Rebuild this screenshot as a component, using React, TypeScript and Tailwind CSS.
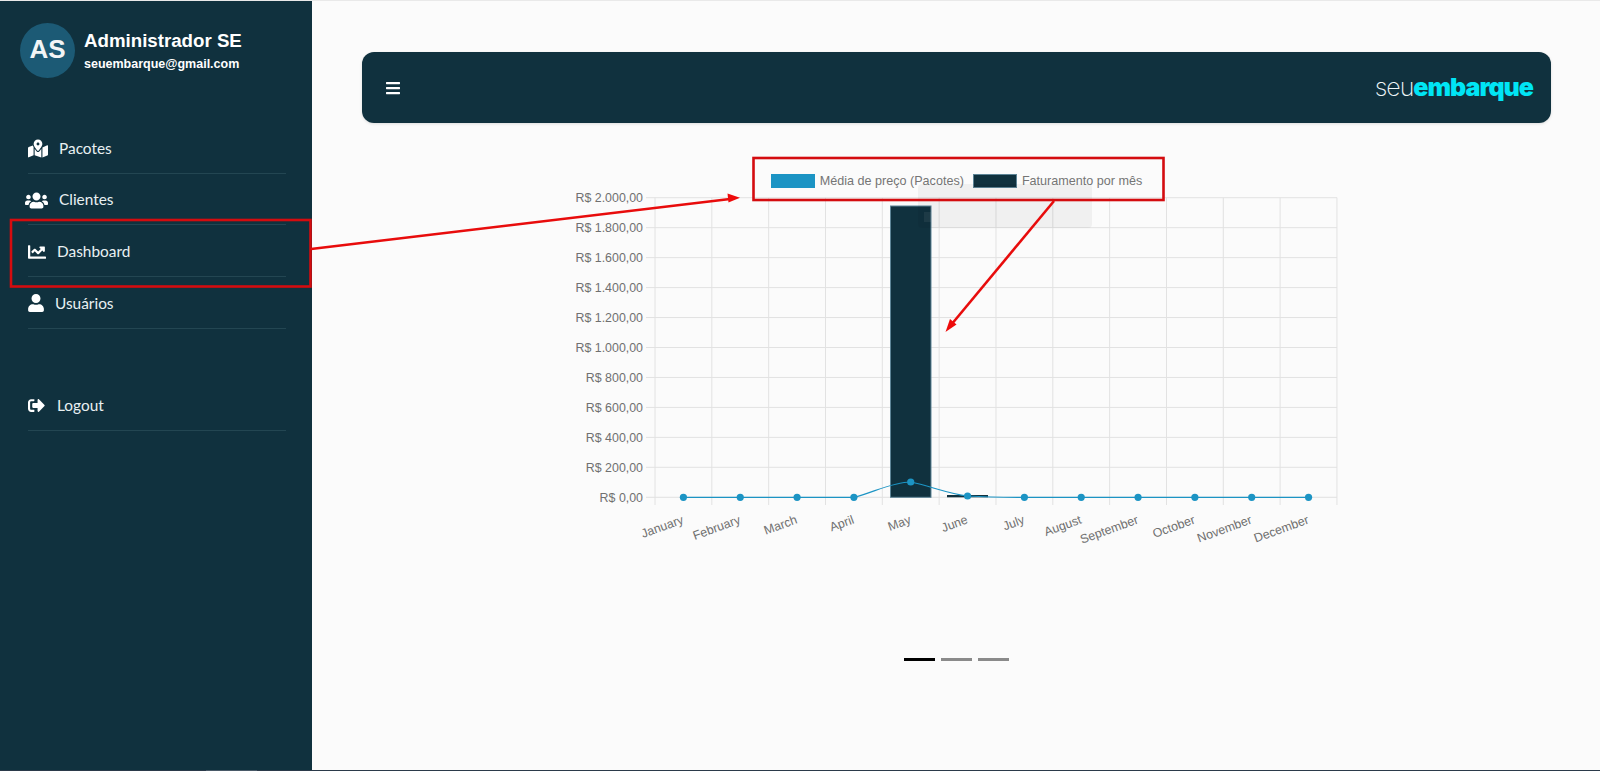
import React from 'react';
import { FaBars, FaChartLine, FaMapMarkedAlt, FaSignOutAlt, FaUser, FaUsers } from 'react-icons/fa';

const navItems = [
  { label: 'Pacotes', icon: FaMapMarkedAlt, iconClass: 'w-[20px] h-[19px] ml-[28px]', gap: 'ml-[11px]' },
  { label: 'Clientes', icon: FaUsers, iconClass: 'w-[23px] h-[19px] ml-[25px]', gap: 'ml-[11px]' },
  { label: 'Dashboard', icon: FaChartLine, iconClass: 'w-[18px] h-[18px] ml-[28px]', gap: 'ml-[11px]' },
  { label: 'Usuários', icon: FaUser, iconClass: 'w-[16px] h-[18px] ml-[28px]', gap: 'ml-[11px]' },
];

const months = ['January', 'February', 'March', 'April', 'May', 'June', 'July', 'August', 'September', 'October', 'November', 'December'];
const yLabels = ['R$ 2.000,00', 'R$ 1.800,00', 'R$ 1.600,00', 'R$ 1.400,00', 'R$ 1.200,00', 'R$ 1.000,00', 'R$ 800,00', 'R$ 600,00', 'R$ 400,00', 'R$ 200,00', 'R$ 0,00'];

const X0 = 655;
const STEP = 56.83;
const Y0 = 197.7;
const YSTEP = 29.96;
const ZERO = Y0 + YSTEP * 10;

const Chart = () => {
  const points = months.map((_, i) => ({
    x: X0 + STEP * (i + 0.5),
    y: i === 4 ? 482 : i === 5 ? 496 : ZERO,
  }));

  return (
    <svg viewBox="556 190 801 380" className="block w-[801px] h-[380px] shrink-0" fontFamily="'Liberation Sans', Arial, sans-serif">
      {/* grid */}
      {yLabels.map((label, i) => (
        <g key={label}>
          <line x1={646} x2={1337} y1={Y0 + YSTEP * i} y2={Y0 + YSTEP * i} stroke="#e2e2e2" strokeWidth="1" />
          <text x={643} y={Y0 + YSTEP * i + 4.5} textAnchor="end" fontSize="12.4" fill="#707070">{label}</text>
        </g>
      ))}
      {Array.from({ length: 13 }).map((_, i) => (
        <line key={i} x1={X0 + STEP * i} x2={X0 + STEP * i} y1={Y0} y2={505} stroke="#e2e2e2" strokeWidth="1" />
      ))}

      {/* bars */}
      <rect x="890.5" y="206" width="40.5" height="291.3" fill="#10313e" stroke="#5d8496" strokeWidth="1" />
      <rect x="947" y="495" width="41" height="2.3" fill="#10313e" />

      {/* line */}
      <path
        d={`M${points[0].x} ${ZERO} L${points[3].x} ${ZERO} C${points[3].x + 18} ${ZERO - 4} ${points[4].x - 19} 482 ${points[4].x} 482 C${points[4].x + 19} 486 ${points[5].x - 18} 494 ${points[5].x} 496 C${points[5].x + 18} 497 ${points[6].x - 18} ${ZERO} ${points[6].x} ${ZERO} L${points[11].x} ${ZERO}`}
        fill="none"
        stroke="#1c94c4"
        strokeWidth="1.2"
      />
      {points.map((p, i) => (
        <circle key={i} cx={p.x} cy={p.y} r="3.6" fill="#1c94c4" />
      ))}

      {/* month labels */}
      {months.map((m, i) => (
        <text
          key={m}
          x={X0 + STEP * (i + 0.5) + 1}
          y={523}
          textAnchor="end"
          fontSize="12.4"
          fill="#707070"
          transform={`rotate(-20 ${X0 + STEP * (i + 0.5) + 1} 523)`}
        >
          {m}
        </text>
      ))}
    </svg>
  );
};

// red marks drawn by hand over the screenshot
const Annotations = () => (
  <svg className="absolute inset-0 w-full h-full pointer-events-none" viewBox="0 0 1600 771">
    <rect x="918" y="184" width="174" height="44" rx="4" fill="#000" fillOpacity="0.045" />
    <rect x="924" y="212" width="7" height="10" fill="#fff" fillOpacity="0.06" />
    <g fill="none" stroke="#e80c0c" strokeWidth="2.6">
      <rect x="11" y="220" width="299.5" height="66.5" stroke="#d40c0f" strokeWidth="2.6" />
      <rect x="753.5" y="158" width="410" height="42" stroke="#d40c0f" strokeWidth="2.6" />
      <line x1="311" y1="249" x2="730" y2="199" />
      <line x1="1054" y1="201" x2="951" y2="325" />
    </g>
    <polygon points="740,197.7 727.5,193.5 728.5,202.5" fill="#ee0b0b" />
    <polygon points="945.5,332 950,319 956.5,324.5" fill="#ee0b0b" />
  </svg>
);

export default function App() {
  return (
    <div className="relative w-full h-[771px] overflow-hidden flex flex-col bg-[#fbfbfb] font-['Liberation_Sans',Arial,sans-serif]">
      <div className="h-px shrink-0 bg-[#e9e9e9]" />
      <div className="flex flex-1 min-h-0">
        {/* Sidebar */}
        <aside className="w-[312px] shrink-0 bg-[#10313e] text-white">
          <div className="flex pl-[20px] pt-[22px] h-[121px]">
            <div className="w-[55px] h-[55px] pb-[2px] rounded-full bg-[#1c5a75] flex items-center justify-center text-[26px] font-bold text-[#f2f5f6]">
              AS
            </div>
            <div className="ml-[9px] pt-[5px]">
              <div className="text-[18.7px] leading-[26px] font-bold">Administrador SE</div>
              <div className="text-[12.5px] leading-[20px] font-bold">seuembarque@gmail.com</div>
            </div>
          </div>

          <nav className="font-['Lato',sans-serif] text-[15.4px] text-[#e8f0f2]">
            {navItems.map(item => {
              const Icon = item.icon;
              return (
                <div key={item.label} className="h-[51.7px] relative flex items-center pt-px">
                  <Icon className={`${item.iconClass} shrink-0 text-white`} />
                  <span className={item.gap}>{item.label}</span>
                  <div className="absolute left-[28px] w-[258px] bottom-0 h-px bg-[#234652]" />
                </div>
              );
            })}
            <div className="h-[51px]" />
            <div className="h-[51.7px] relative flex items-center">
              <FaSignOutAlt className="w-[17px] h-[17px] ml-[28px] shrink-0 text-white" />
              <span className="ml-[12px]">Logout</span>
              <div className="absolute left-[28px] w-[258px] bottom-0 h-px bg-[#234652]" />
            </div>
          </nav>
        </aside>

        {/* Main */}
        <main className="flex-1 min-w-0 flex flex-col pl-[50px] pr-[49px] pt-[51px]">
          <header className="h-[71px] shrink-0 rounded-[12px] bg-[#10313e] shadow-[0_1px_3px_rgba(0,0,0,0.12)] flex items-center justify-between pl-[23px] pr-[18px]">
            <FaBars className="w-[16px] h-[16px] text-white" />
            <div className="font-['Inter',sans-serif] text-[25px] tracking-[-1px] leading-none">
              <span className="font-extralight text-[#eef6f8]">seu</span>
              <span className="font-black text-[#00e5f5]">embarque</span>
            </div>
          </header>

          <div className="flex flex-col items-center">
            <div className="flex items-center h-[14px] mt-[51px] text-[12.6px] text-[#757575]">
              <span className="w-[44px] h-[14px] bg-[#1c94c4]" />
              <span className="ml-[5px]">Média de preço (Pacotes)</span>
              <span className="ml-[9px] w-[44px] h-[14px] bg-[#10313e] border border-[#5d8496]" />
              <span className="ml-[5px]">Faturamento por mês</span>
            </div>
            <div className="mt-[2px]">
              <Chart />
            </div>
            <div className="flex gap-[6px] mt-[88px]">
              <span className="w-[31px] h-[3px] bg-black" />
              <span className="w-[31px] h-[3px] bg-[#8a8a8a]" />
              <span className="w-[31px] h-[3px] bg-[#8a8a8a]" />
            </div>
          </div>
        </main>
      </div>
      <div className="h-px shrink-0 bg-[#2b3a4a] flex">
        <div className="ml-[206px] w-[51px] h-px bg-[#4a5a68]" />
      </div>
      <Annotations />
    </div>
  );
}
